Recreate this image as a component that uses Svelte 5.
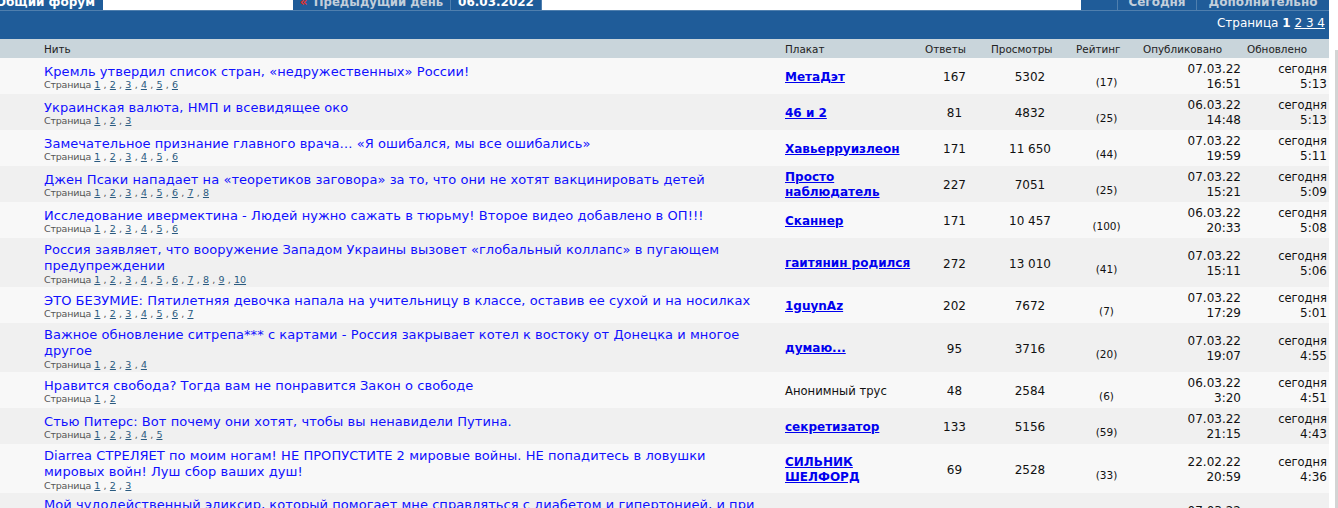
<script>
    const pages = (n) => Array.from({ length: n }, (_, i) => i + 1);

    const threads = [
        { title: "Кремль утвердил список стран, «недружественных» России!", pages: 6, poster: ["МетаДэт"], replies: "167", views: "5302", rating: "(17)", date: "07.03.22", time: "16:51", upd: "5:13" },
        { title: "Украинская валюта, НМП и всевидящее око", pages: 3, poster: ["46 и 2"], replies: "81", views: "4832", rating: "(25)", date: "06.03.22", time: "14:48", upd: "5:13" },
        { title: "Замечательное признание главного врача… «Я ошибался, мы все ошибались»", pages: 6, poster: ["Хавьерруизлеон"], replies: "171", views: "11 650", rating: "(44)", date: "07.03.22", time: "19:59", upd: "5:11" },
        { title: "Джен Псаки нападает на «теоретиков заговора» за то, что они не хотят вакцинировать детей", pages: 8, poster: ["Просто", "наблюдатель"], replies: "227", views: "7051", rating: "(25)", date: "07.03.22", time: "15:21", upd: "5:09" },
        { title: "Исследование ивермектина - Людей нужно сажать в тюрьму! Второе видео добавлено в ОП!!!", pages: 6, poster: ["Сканнер"], replies: "171", views: "10 457", rating: "(100)", date: "06.03.22", time: "20:33", upd: "5:08" },
        { title: "Россия заявляет, что вооружение Западом Украины вызовет «глобальный коллапс» в пугающем предупреждении", pages: 10, poster: ["гаитянин родился"], replies: "272", views: "13 010", rating: "(41)", date: "07.03.22", time: "15:11", upd: "5:06" },
        { title: "ЭТО БЕЗУМИЕ: Пятилетняя девочка напала на учительницу в классе, оставив ее сухой и на носилках", pages: 7, poster: ["1guynAz"], replies: "202", views: "7672", rating: "(7)", date: "07.03.22", time: "17:29", upd: "5:01" },
        { title: "Важное обновление ситрепа*** с картами - Россия закрывает котел к востоку от Донецка и многое другое", pages: 4, poster: ["думаю..."], replies: "95", views: "3716", rating: "(20)", date: "07.03.22", time: "19:07", upd: "4:55" },
        { title: "Нравится свобода? Тогда вам не понравится Закон о свободе", pages: 2, anon: "Анонимный трус", replies: "48", views: "2584", rating: "(6)", date: "06.03.22", time: "3:20", upd: "4:51" },
        { title: "Стью Питерс: Вот почему они хотят, чтобы вы ненавидели Путина.", pages: 5, poster: ["секретизатор"], replies: "133", views: "5156", rating: "(59)", date: "07.03.22", time: "21:15", upd: "4:43" },
        { title: "Diarrea СТРЕЛЯЕТ по моим ногам! НЕ ПРОПУСТИТЕ 2 мировые войны. НЕ попадитесь в ловушки мировых войн! Луш сбор ваших душ!", pages: 3, poster: ["СИЛЬНИК", "ШЕЛФОРД"], replies: "69", views: "2528", rating: "(33)", date: "22.02.22", time: "20:59", upd: "4:36" },
        { title: "Мой чудодейственный эликсир, который помогает мне справляться с диабетом и гипертонией, и при этом", pages: 2, poster: ["Доктор"], replies: "54", views: "1920", rating: "(12)", date: "07.03.22", time: "12:02", upd: "4:30" }
    ];
</script>

<div class="page">
    <nav class="nav">
        <div class="forum"><span>Общий форум</span></div>
        <div class="blank first"></div>
        <div class="tab prev"><span><b class="arrow">«</b> <span class="prev-label">Предыдущий день</span></span></div>
        <div class="tab date"><span>06.03.2022</span></div>
        <div class="blank second"></div>
        <div class="gap"></div>
        <div class="tab today"><span>Сегодня</span></div>
        <div class="tab more"><span>Дополнительно</span></div>
    </nav>

    <div class="pagebar">
        Страница <b>1</b> <span class="links">2 3 4</span>
    </div>

    <table>
        <colgroup>
            <col class="c-thread" />
            <col class="c-poster" />
            <col class="c-replies" />
            <col class="c-views" />
            <col class="c-rating" />
            <col class="c-posted" />
            <col class="c-updated" />
        </colgroup>
        <thead>
            <tr>
                <th class="h-thread">Нить</th>
                <th class="h-poster">Плакат</th>
                <th class="h-replies">Ответы</th>
                <th class="h-views">Просмотры</th>
                <th class="h-rating">Рейтинг</th>
                <th class="h-posted">Опубликовано</th>
                <th class="h-updated">Обновлено</th>
            </tr>
        </thead>
        <tbody>
            {#each threads as t}
                <tr>
                    <td class="thread">
                        <a class="title" href="#top">{t.title}</a>
                        <div class="pager">
                            <span class="pager-label">Страница</span>
                            {#each pages(t.pages) as p, i}
                                <a href="#top">{p}</a>{#if i < t.pages - 1}{" , "}{/if}
                            {/each}
                        </div>
                    </td>
                    <td class="poster">
                        {#if t.anon}
                            <span class="anon">{t.anon}</span>
                        {:else}
                            <a href="#top">{#each t.poster as line, i}{#if i > 0}<br />{/if}{line}{/each}</a>
                        {/if}
                    </td>
                    <td class="replies">{t.replies}</td>
                    <td class="views">{t.views}</td>
                    <td class="rating"><span class="stars"></span>{t.rating}</td>
                    <td class="stamp">{t.date}<br />{t.time}</td>
                    <td class="stamp"><span class="today-word">сегодня</span><br />{t.upd}</td>
                </tr>
            {/each}
        </tbody>
    </table>

    <div class="scrollbar"></div>
</div>

<style>
    :global(body) {
        margin: 0;
        overflow: hidden;
        background: #fff;
    }

    .page {
        width: 1329px;
        height: 508px;
        overflow: hidden;
        font-family: "DejaVu Sans", Verdana, sans-serif;
        font-size: 12px;
        color: #111;
    }

    .scrollbar {
        position: fixed;
        top: 50px;
        right: 0;
        bottom: 0;
        width: 3px;
        background: #d4d4d4;
    }

    .nav {
        display: flex;
        height: 10px;
        background: #1f5c99;
        overflow: hidden;
    }
    .nav > div {
        display: flex;
        align-items: flex-end;
        justify-content: center;
        font-weight: bold;
        font-size: 12px;
        line-height: 16px;
        white-space: nowrap;
    }
    .forum {
        width: 103px;
        color: #fff;
        justify-content: flex-end !important;
    }
    .forum span {
        padding-right: 8px;
    }
    .blank {
        background: #fff;
    }
    .first {
        width: 190px;
    }
    .second {
        width: 539px;
    }
    .gap {
        width: 36px;
    }
    .tab {
        box-sizing: border-box;
        border-right: 1px solid #4f7fae;
        color: #c3cfdb;
    }
    .prev {
        width: 158px;
    }
    .prev-label {
        font-size: 11.7px;
        margin-left: 2px;
    }
    .date {
        width: 91px;
        color: #fff;
    }
    .today {
        width: 80px;
        border-left: 1px solid #4f7fae;
    }
    .more {
        width: 132px;
        border-right: none;
    }
    .arrow {
        color: #e0302a;
    }

    .pagebar {
        box-sizing: border-box;
        height: 29px;
        border-top: 1px solid #4f7fae;
        background: #1f5c99;
        color: #fff;
        font-size: 12px;
        line-height: 24px;
        text-align: right;
        padding-right: 4px;
    }
    .links {
        text-decoration: underline;
    }

    table {
        width: 1329px;
        border-collapse: collapse;
        table-layout: fixed;
    }
    .c-thread { width: 781px; }
    .c-poster { width: 135px; }
    .c-replies { width: 69px; }
    .c-views { width: 73px; }
    .c-rating { width: 85px; }
    .c-posted { width: 100px; }
    .c-updated { width: 86px; }

    th {
        height: 19px;
        padding: 0;
        background: #c9d5db;
        font-size: 10.4px;
        font-weight: normal;
        text-align: left;
        color: #222;
    }
    .h-thread { padding-left: 44px; }
    .h-poster { padding-left: 4px; }
    .h-replies { padding-left: 9px; }
    .h-views { padding-left: 6px; }
    .h-rating { padding-left: 18px; }
    .h-posted { padding-left: 0; }
    .h-updated { padding-left: 4px; }

    td {
        height: 30px;
        padding: 4px 2px 2px;
        vertical-align: middle;
    }
    tbody tr:nth-child(odd) {
        background: #f8f8f8;
    }
    tbody tr:nth-child(even) {
        background: #f0f0f0;
    }

    .thread {
        padding: 4px 21px 1.5px 44px;
        font-size: 13px;
        line-height: 16px;
        letter-spacing: 0.06px;
    }
    .title {
        color: #1010ff;
        text-decoration: none;
    }
    .pager {
        margin-top: -1.5px;
        font-size: 9.5px;
        line-height: 13px;
        letter-spacing: 0;
        word-spacing: 0.2px;
        color: #555;
    }
    .pager-label {
        letter-spacing: -0.2px;
    }
    .pager a {
        color: #2a5a80;
    }
    .poster {
        padding: 4px 0 2px 4px;
        line-height: 15px;
    }
    .poster a {
        color: #0000ee;
        font-weight: bold;
    }
    .anon {
        font-size: 11.6px;
    }
    .replies {
        text-align: center;
        padding: 2px 0 0 8px;
    }
    .views {
        text-align: center;
        padding: 2px 0 0 17px;
    }
    .rating {
        text-align: center;
        padding: 3px 0 3px 12px;
        font-size: 10.5px;
        line-height: 13px;
    }
    .stars {
        display: block;
        height: 13px;
    }
    .stamp {
        text-align: right;
        line-height: 15px;
    }
    .today-word {
        font-size: 11.5px;
    }
</style>
